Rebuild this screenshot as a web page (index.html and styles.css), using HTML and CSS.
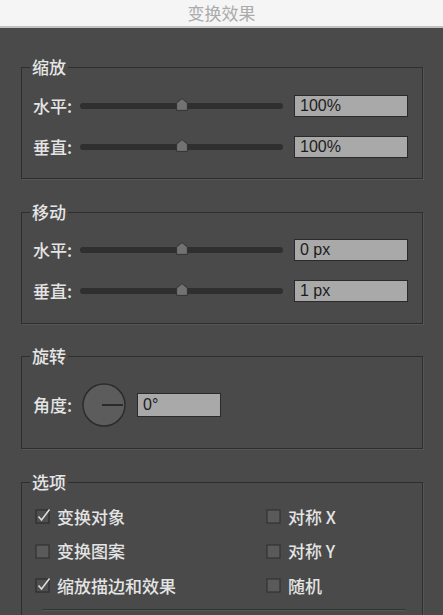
FILE: index.html
```html
<!DOCTYPE html>
<html lang="zh-CN">
<head>
<meta charset="utf-8">
<title>变换效果</title>
<link rel="stylesheet" href="styles.css">
</head>
<body>
<div class="titlebar">变换效果</div>
<main class="panel">
  <fieldset class="group g-scale">
    <legend>缩放</legend>
    <div class="row">
      <span class="label">水平:</span>
      <div class="track"><svg class="thumb" viewBox="0 0 12 13" width="12" height="13"><path d="M6 0.6 L11.4 5 L11.4 12.4 L0.6 12.4 L0.6 5 Z" fill="#727272" stroke="#333" stroke-width="1"/></svg></div>
      <div class="field">100%</div>
    </div>
    <div class="row">
      <span class="label">垂直:</span>
      <div class="track"><svg class="thumb" viewBox="0 0 12 13" width="12" height="13"><path d="M6 0.6 L11.4 5 L11.4 12.4 L0.6 12.4 L0.6 5 Z" fill="#727272" stroke="#333" stroke-width="1"/></svg></div>
      <div class="field">100%</div>
    </div>
  </fieldset>

  <fieldset class="group g-move">
    <legend>移动</legend>
    <div class="row">
      <span class="label">水平:</span>
      <div class="track"><svg class="thumb" viewBox="0 0 12 13" width="12" height="13"><path d="M6 0.6 L11.4 5 L11.4 12.4 L0.6 12.4 L0.6 5 Z" fill="#727272" stroke="#333" stroke-width="1"/></svg></div>
      <div class="field">0 px</div>
    </div>
    <div class="row">
      <span class="label">垂直:</span>
      <div class="track"><svg class="thumb" viewBox="0 0 12 13" width="12" height="13"><path d="M6 0.6 L11.4 5 L11.4 12.4 L0.6 12.4 L0.6 5 Z" fill="#727272" stroke="#333" stroke-width="1"/></svg></div>
      <div class="field">1 px</div>
    </div>
  </fieldset>

  <fieldset class="group g-rotate">
    <legend>旋转</legend>
    <div class="row angle-row">
      <span class="label">角度:</span>
      <svg class="dial" viewBox="0 0 44 44" width="44" height="44">
        <circle cx="22" cy="22" r="21" fill="#5c5c5c" stroke="#2c2c2c" stroke-width="1.5"/>
        <line x1="20" y1="22" x2="41" y2="22" stroke="#2a2a2a" stroke-width="2"/>
      </svg>
      <div class="field field-angle">0°</div>
    </div>
  </fieldset>

  <fieldset class="group g-options">
    <legend>选项</legend>
    <div class="options">
      <label class="opt"><svg class="box" viewBox="0 0 16 16" width="16" height="16"><rect x="1" y="2" width="13" height="13" fill="#4e4e4e" stroke="#2e2e2e" stroke-width="1.2"/><path d="M3.5 8.5 L6.5 12 L14.5 1.5" fill="none" stroke="#dcdcdc" stroke-width="1.6"/></svg>变换对象</label>
      <label class="opt"><svg class="box" viewBox="0 0 16 16" width="16" height="16"><rect x="1" y="2" width="13" height="13" fill="#5a5a5a" stroke="#333" stroke-width="1.2"/></svg>对称 X</label>
      <label class="opt"><svg class="box" viewBox="0 0 16 16" width="16" height="16"><rect x="1" y="2" width="13" height="13" fill="#5a5a5a" stroke="#333" stroke-width="1.2"/></svg>变换图案</label>
      <label class="opt"><svg class="box" viewBox="0 0 16 16" width="16" height="16"><rect x="1" y="2" width="13" height="13" fill="#5a5a5a" stroke="#333" stroke-width="1.2"/></svg>对称 Y</label>
      <label class="opt"><svg class="box" viewBox="0 0 16 16" width="16" height="16"><rect x="1" y="2" width="13" height="13" fill="#4e4e4e" stroke="#2e2e2e" stroke-width="1.2"/><path d="M3.5 8.5 L6.5 12 L14.5 1.5" fill="none" stroke="#dcdcdc" stroke-width="1.6"/></svg>缩放描边和效果</label>
      <label class="opt"><svg class="box" viewBox="0 0 16 16" width="16" height="16"><rect x="1" y="2" width="13" height="13" fill="#5a5a5a" stroke="#333" stroke-width="1.2"/></svg>随机</label>
    </div>
    <div class="separator"></div>
  </fieldset>
</main>
</body>
</html>
```

FILE: styles.css
```css
html, body {
  margin: 0;
  padding: 0;
}
body {
  width: 443px;
  height: 615px;
  overflow: hidden;
  background: #4a4a4a;
  font-family: "Noto Sans CJK SC", "Liberation Sans", sans-serif;
  color: #e4e4e4;
}
.titlebar {
  height: 26px;
  line-height: 26px;
  background: #f5f5f5;
  border-bottom: 2px solid #c2c2c2;
  text-align: center;
  font-size: 17px;
  color: #ababab;
}
.panel {
  display: flex;
  flex-direction: column;
}
.group {
  margin: 0 20px 0 21px;
  border: 1px solid #2e2e2e;
  box-shadow: 1px 1px 0 #555;
  padding: 0 14px 20px 11px;
  min-width: 0;
}
.group legend {
  font-size: 17px;
  line-height: 20px;
  height: 20px;
  padding: 0 2px;
  margin-left: -3px;
  font-weight: 500;
  color: #e6e6e6;
}
.g-scale { margin-top: 29px; padding-top: 18px; }
.g-move { margin-top: 23px; padding-top: 17px; padding-bottom: 21px; }
.g-rotate { margin-top: 22px; padding-top: 17px; padding-bottom: 21px; }
.g-options { margin-top: 23px; padding-top: 13px; padding-bottom: 40px; }

.row {
  display: flex;
  align-items: center;
  height: 22px;
}
.row + .row { margin-top: 19px; }
.label {
  width: 47px;
  flex: none;
  font-size: 17px;
  font-weight: 500;
  line-height: 22px;
  white-space: nowrap;
}
.track {
  position: relative;
  width: 203px;
  height: 6px;
  border-radius: 3px;
  background: #2f2f2f;
  margin-right: 11px;
  flex: none;
}
.thumb {
  position: absolute;
  left: 96px;
  top: -5px;
  display: block;
}
.field {
  box-sizing: border-box;
  width: 114px;
  height: 22px;
  background: #a9a9a9;
  border: 1px solid #2a2a2a;
  font-family: "Liberation Sans", Arial, sans-serif;
  font-size: 16px;
  line-height: 20px;
  color: #1c1c1c;
  padding-left: 5px;
  flex: none;
}
.angle-row { height: 44px; }
.dial {
  display: block;
  margin-left: 2px;
  flex: none;
}
.field-angle {
  width: 84px;
  height: 24px;
  line-height: 22px;
  margin-left: 11px;
}
.options {
  display: grid;
  grid-template-columns: 231px 1fr;
  row-gap: 12.5px;
  padding-left: 2px;
}
.opt {
  display: flex;
  align-items: center;
  height: 22px;
  font-size: 17px;
  font-weight: 500;
  white-space: nowrap;
}
.box {
  display: block;
  margin-right: 6px;
  flex: none;
}
.separator {
  margin: 13px 2px 0 9px;
  height: 0;
  border-top: 1px solid #333;
  border-bottom: 1px solid #575757;
}
```
